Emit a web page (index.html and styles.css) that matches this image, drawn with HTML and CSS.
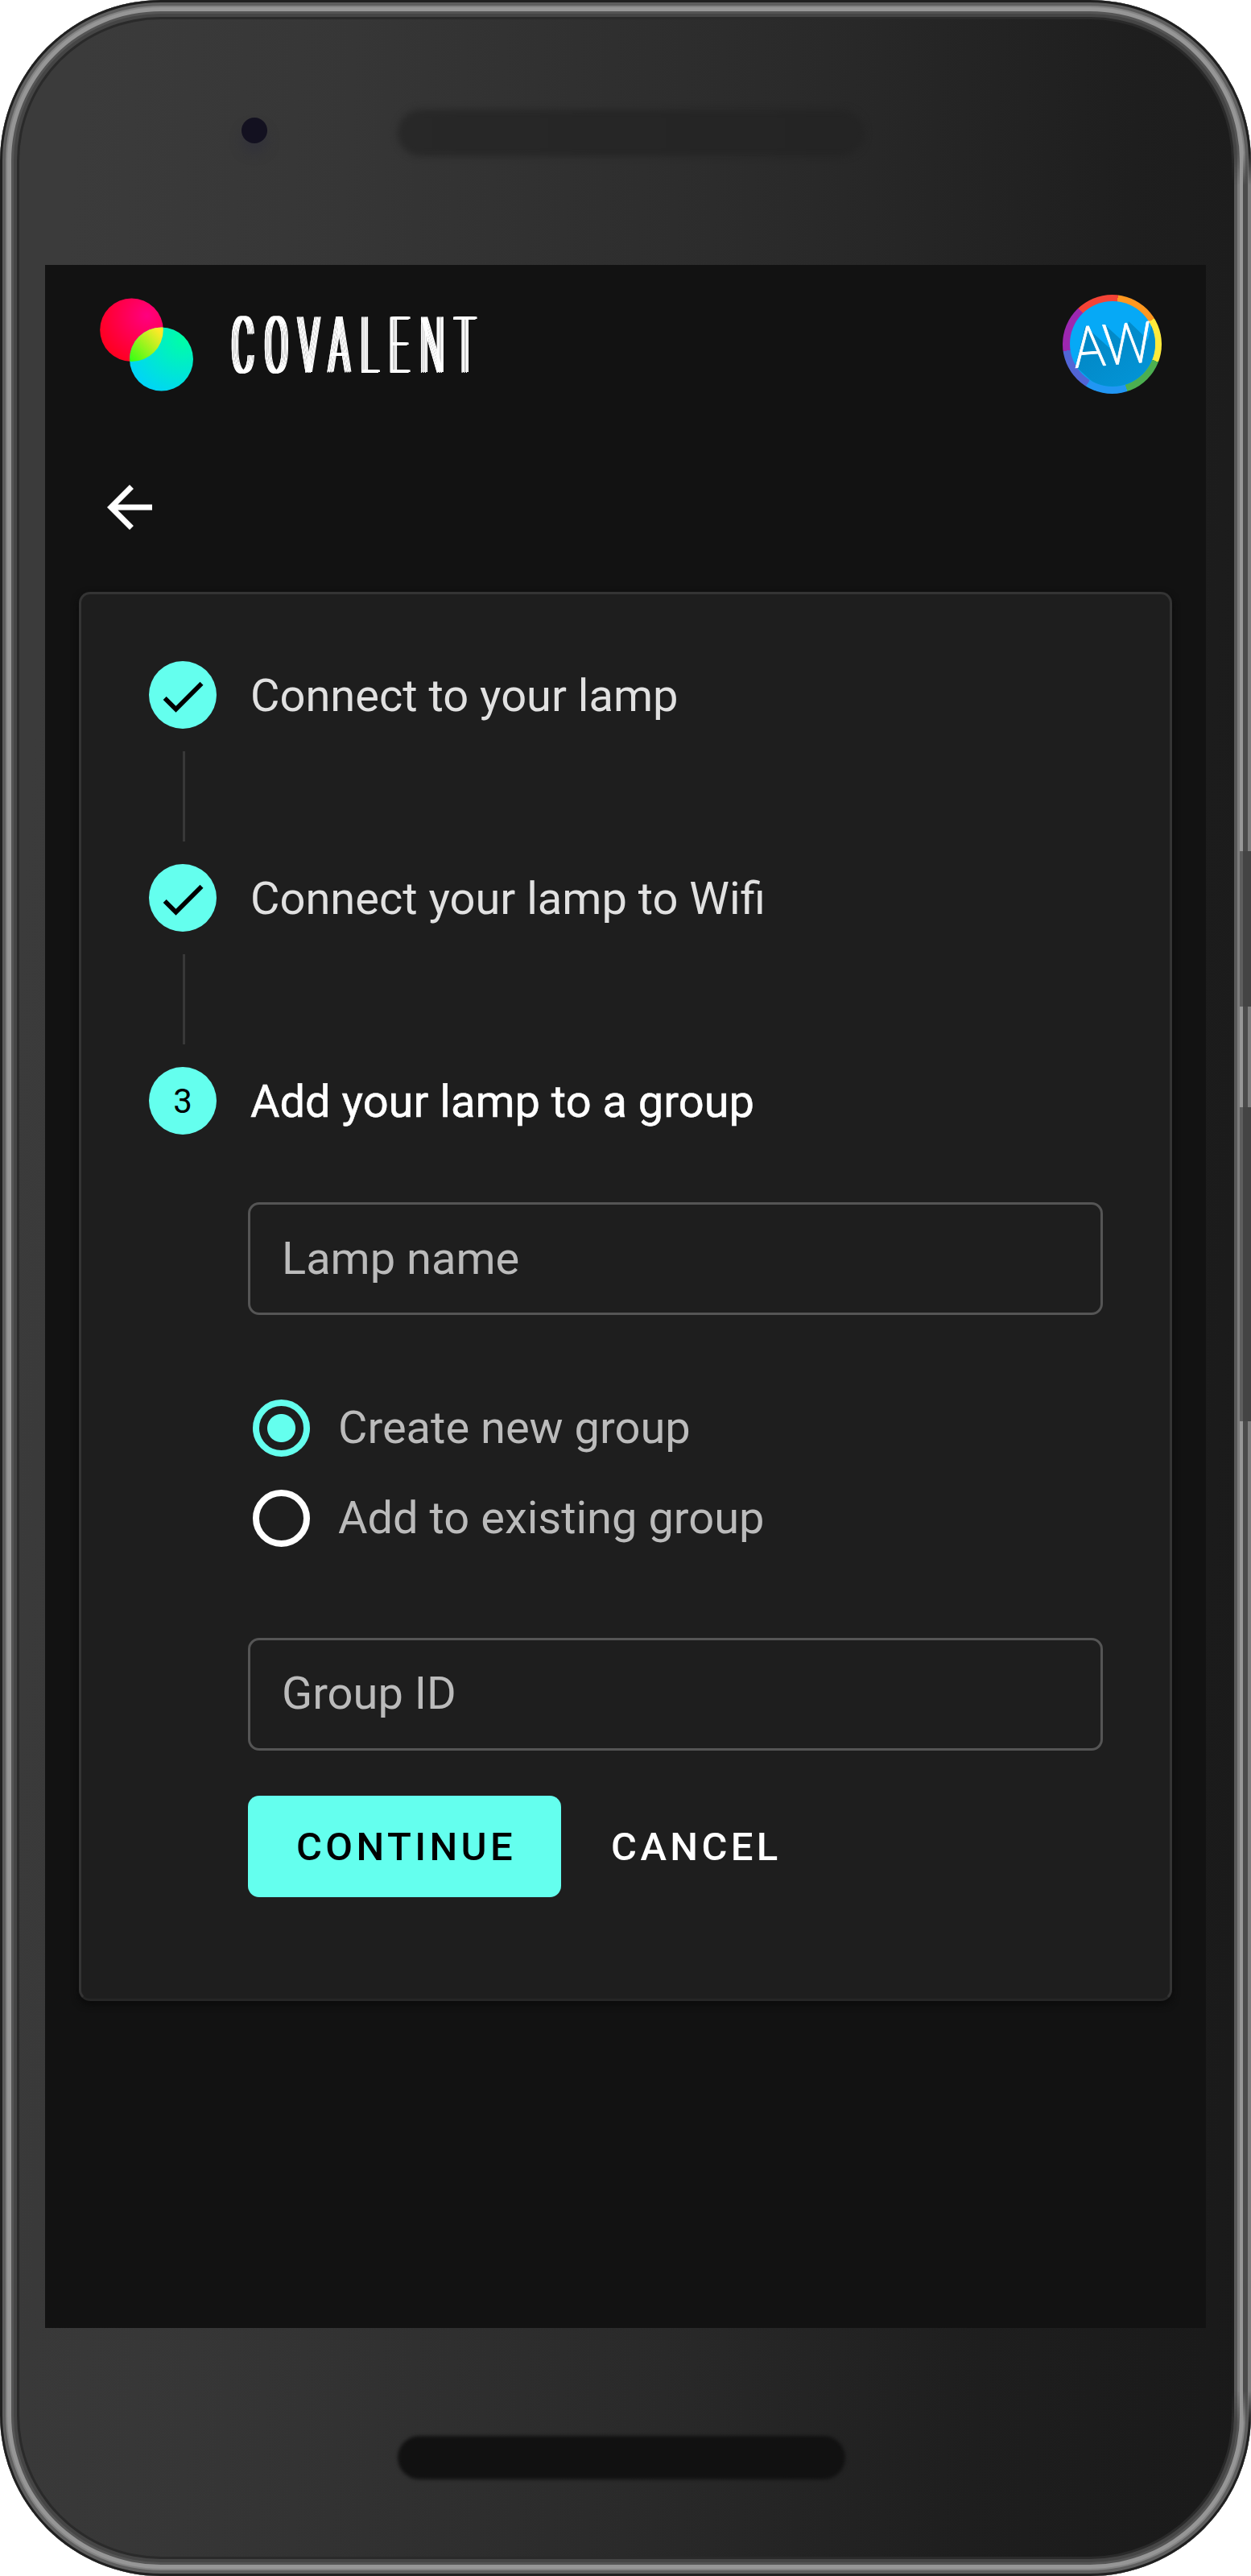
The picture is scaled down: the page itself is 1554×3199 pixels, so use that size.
FILE: index.html
```html
<!DOCTYPE html>
<html lang="en">
<head>
<meta charset="utf-8">
<title>Covalent – Add lamp</title>
<link rel="stylesheet" href="styles.css">
</head>
<body>
<div class="phone">
  <span class="side-button side-button--power"></span>
  <span class="side-button side-button--volume"></span>
  <div class="bezel bezel--top">
    <span class="camera"></span>
    <span class="earpiece"></span>
  </div>
  <div class="screen">
    <header class="topbar">
      <svg class="logo" viewBox="0 0 116 116" aria-hidden="true">
        <defs>
          <radialGradient id="red" gradientUnits="userSpaceOnUse" cx="59" cy="22" r="62">
            <stop offset="0" stop-color="#ff0080"/><stop offset="1" stop-color="#ff0023"/>
          </radialGradient>
          <radialGradient id="cyan" gradientUnits="userSpaceOnUse" cx="104" cy="50" r="84">
            <stop offset="0" stop-color="#00ffa5"/><stop offset="1" stop-color="#00d0ff"/>
          </radialGradient>
          <linearGradient id="lime" gradientUnits="userSpaceOnUse" x1="75" y1="42" x2="38" y2="78">
            <stop offset="0" stop-color="#ffe928"/><stop offset="1" stop-color="#35ff14"/>
          </linearGradient>
          <clipPath id="overlap"><circle cx="39.5" cy="39.7" r="39.3"/></clipPath>
        </defs>
        <circle cx="39.5" cy="39.7" r="39.3" fill="url(#red)"/>
        <circle cx="76.5" cy="76" r="39.5" fill="url(#cyan)"/>
        <circle cx="76.5" cy="76" r="39.5" fill="url(#lime)" clip-path="url(#overlap)"/>
      </svg>
      <h1 class="wordmark">COVALENT</h1>
      <div class="avatar">
        <svg viewBox="-53 -53 106 106">
          <defs>
            <linearGradient id="shade" x1="0" y1="0" x2="1" y2="1">
              <stop offset="0" stop-color="#0284c0"/><stop offset="1" stop-color="#039be0"/>
            </linearGradient>
            <clipPath id="disc"><circle r="53"/></clipPath>
          </defs>
          <circle r="53" fill="#06a9f6"/>
          <path clip-path="url(#disc)" fill="url(#shade)" d="M-46 28 L-34 -22 L4 12 L-11 -25 L14 -2 L20 -28 L44 -5 L49 -26 L90 10 L60 60 L0 70Z"/>
          <text class="initials" transform="rotate(-4.5)" x="0" y="26" text-anchor="middle" textLength="98" lengthAdjust="spacingAndGlyphs">AW</text>
        </svg>
      </div>
    </header>
    <nav class="nav">
      <svg class="back" viewBox="0 0 24 24" role="img" aria-label="Back"><path fill="#fff" d="M20 11H7.83l5.59-5.59L12 4l-8 8 8 8 1.41-1.41L7.83 13H20v-2z"/></svg>
    </nav>
    <main class="card">
      <div class="step">
        <span class="badge"><svg viewBox="0 0 24 24"><path d="M9 16.17L4.83 12l-1.42 1.41L9 19 21 7l-1.41-1.41z"/></svg></span>
        <span class="step-label">Connect to your lamp</span>
      </div>
      <div class="connector"></div>
      <div class="step">
        <span class="badge"><svg viewBox="0 0 24 24"><path d="M9 16.17L4.83 12l-1.42 1.41L9 19 21 7l-1.41-1.41z"/></svg></span>
        <span class="step-label">Connect your lamp to Wifi</span>
      </div>
      <div class="connector"></div>
      <div class="step">
        <span class="badge">3</span>
        <span class="step-label step-label--active">Add your lamp to a group</span>
      </div>
      <form class="form">
        <div class="field">Lamp name</div>
        <div class="options">
          <label class="option"><span class="radio radio--on"></span>Create new group</label>
          <label class="option"><span class="radio"></span>Add to existing group</label>
        </div>
        <div class="field field--group">Group ID</div>
        <div class="actions">
          <button type="button" class="btn btn--primary">CONTINUE</button>
          <button type="button" class="btn">CANCEL</button>
        </div>
      </form>
    </main>
  </div>
  <div class="bezel bezel--bottom"><span class="speaker"></span></div>
</div>
</body>
</html>
```
FILE: styles.css
```css
* { box-sizing: border-box; }

body {
  margin: 0;
  background: #fff;
  font-family: Roboto, "Liberation Sans", sans-serif;
  font-size: 56px;
  color: #fff;
}

.phone {
  position: relative;
  width: 1554px;
  height: 3199px;
  padding: 0 56px;
  border-radius: 200px;
  overflow: hidden;
  background: linear-gradient(94deg, #3b3b3b 6%, #363636 25%, #2a2a2a 56%, #1e1e1e 80%, #191919 100%);
}

/* Metal rim, drawn above the body */
.phone::after {
  content: "";
  position: absolute;
  inset: 0;
  border-radius: 200px;
  box-shadow:
    inset 0 0 0 3px #202020,
    inset 0 0 0 7px #5e5e5e,
    inset 0 0 0 9px #838383,
    inset 0 0 0 14px #969696,
    inset 0 0 0 17px #555,
    inset 0 0 0 21px #454545,
    inset 0 0 0 24px #2a2a2a;
}

/* The right edge catches more light along its straight part */
.phone::before {
  content: "";
  position: absolute;
  z-index: 1;
  top: 190px;
  bottom: 190px;
  right: 0;
  width: 24px;
  background: linear-gradient(90deg, #1c1c1c 3px, #5a5a5a 3px 7px, #7e7e7e 7px 10px, #979797 10px 14px, #4a4a4a 14px 20px, #7d7d7d 20px);
  -webkit-mask-image: linear-gradient(transparent, #000 40px, #000 calc(100% - 40px), transparent);
  mask-image: linear-gradient(transparent, #000 40px, #000 calc(100% - 40px), transparent);
}

.side-button {
  position: absolute;
  right: 0;
  z-index: 2;
  width: 14px;
  background: #444;
  border-left: 4px solid #5e5e5e;
}
.side-button--power { top: 1057px; height: 193px; }
.side-button--volume { top: 1375px; height: 390px; }

.bezel--top {
  display: flex;
  align-items: flex-start;
  height: 329px;
  padding: 136px 0 0 244px;
}
.camera {
  width: 32px;
  height: 32px;
  margin-top: 10px;
  border-radius: 50%;
  background: #131120;
  box-shadow: 0 12px 14px #33333a;
}
.earpiece {
  width: 580px;
  height: 58px;
  margin-left: 162px;
  border-radius: 29px;
  background: linear-gradient(90deg, #282828, #242424);
  filter: blur(4px);
}

.screen {
  width: 1442px;
  height: 2562px;
  padding: 0 42px;
  background: #121212;
}

.topbar {
  display: flex;
  align-items: center;
  height: 196px;
  padding: 0 13px 0 26px;
}
.logo { width: 116px; height: 116px; margin-top: 2px; }
.wordmark {
  width: 310px;
  margin: 4px 0 0 45px;
  font-size: 97px;
  font-weight: 100;
  line-height: 97px;
  letter-spacing: 35.5px;
  white-space: nowrap;
  transform: scaleX(.42);
  transform-origin: 0 50%;
  text-shadow: 0 .6px #fff, 3px 0 #fff, 6px 0 #fff, 6px .6px #fff, 9px 0 #fff, 12px 0 #fff, 12px .6px #fff, 15px 0 #fff, 17px 0 #fff;
}
.avatar {
  width: 123px;
  height: 123px;
  margin-left: auto;
  padding: 8.5px;
  border-radius: 50%;
  background: conic-gradient(#f44336 7deg, #ff9820 7deg 58.7deg, #ffeb3b 58.7deg 111deg, #4caf50 111deg 162deg, #2196f3 162deg 212deg, #5165d6 212deg 262deg, #9c27b0 262deg 316.6deg, #f44336 316.6deg);
}
.avatar svg { display: block; width: 106px; height: 106px; overflow: visible; }
.initials {
  font-family: Lato, sans-serif;
  font-size: 71px;
  font-weight: 300;
  fill: #fff;
  stroke: #fff;
  stroke-width: .8px;
}

.nav { height: 210px; padding: 63px 0 0 21px; }
.back { display: block; width: 84px; height: 84px; }

.card {
  height: 1750px;
  padding: 83px 83px 0 84px;
  border: 3px solid #343434;
  border-bottom-color: #262626;
  border-radius: 14px;
  background: #1e1e1e;
  box-shadow: 0 4px 10px #0a0a0a;
}

.step {
  display: flex;
  align-items: center;
  gap: 42px;
  height: 84px;
  color: #e1e1e1;
}
.badge {
  display: flex;
  align-items: center;
  justify-content: center;
  width: 84px;
  height: 84px;
  border-radius: 50%;
  background: #64ffee;
  color: #000;
  font-size: 42px;
}
.badge svg { width: 68px; height: 68px; margin-top: 3px; }
.step-label { margin-top: 1px; }
.step-label--active { color: #fff; -webkit-text-stroke: .5px #fff; }
.connector {
  width: 3px;
  height: 112px;
  margin: 28px 0 28px 42px;
  background: #383838;
}

.form { padding: 84px 0 0 123px; color: #bbb; }
.field {
  display: flex;
  align-items: center;
  width: 1062px;
  height: 140px;
  padding: 0 39px;
  border: 3px solid #555;
  border-radius: 14px;
}
.field--group { padding-bottom: 3px; }
.options { padding: 84px 6px 93px; }
.option { display: flex; align-items: center; gap: 35px; height: 112px; }
.radio {
  width: 71px;
  height: 71px;
  border: 8px solid #fff;
  border-radius: 50%;
}
.radio--on {
  border-color: #64ffee;
  background: radial-gradient(circle, #64ffee 17px, transparent 18px);
}

.actions { display: flex; gap: 4px; padding-top: 56px; }
.btn {
  height: 126px;
  padding: 1px 56px 0 58px;
  border: 0;
  border-radius: 14px;
  background: none;
  color: #fff;
  font: 500 49px Roboto, sans-serif;
  letter-spacing: 4.375px;
}
.btn--primary { padding-left: 60px; background: #64ffee; color: #000; }

.bezel--bottom { display: flex; height: 308px; padding: 134px 0 0 438px; }
.speaker {
  width: 556px;
  height: 54px;
  border-radius: 27px;
  background: #111;
  filter: blur(2px);
}
```
